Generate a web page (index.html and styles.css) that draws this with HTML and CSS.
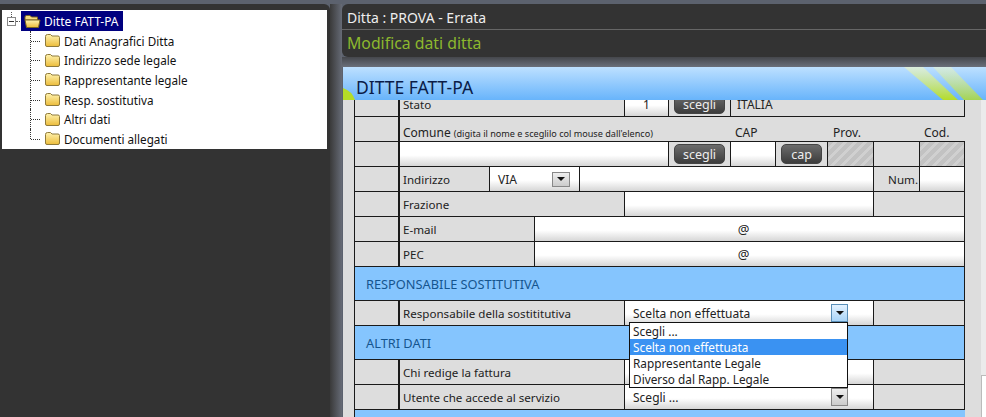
FILE: index.html
```html
<!DOCTYPE html>
<html lang="it">
<head>
    <meta charset="UTF-8">
    <title>Ditte FATT-PA</title>
    <link rel="stylesheet" href="styles.css">
</head>
<body>
    <svg class="defs" width="0" height="0">
        <defs>
            <linearGradient id="fold" x1="0" y1="0" x2="0" y2="1">
                <stop offset="0" stop-color="#fff3b0"/>
                <stop offset="1" stop-color="#ecbc3a"/>
            </linearGradient>
            <symbol id="folder" viewBox="0 0 17 15">
                <path d="M1.5 3.5 Q1.5 1.5 3.5 1.5 H6.5 L8 3 H14 Q15.5 3 15.5 4.5 V12 Q15.5 13.5 14 13.5 H3 Q1.5 13.5 1.5 12 Z" fill="url(#fold)" stroke="#8f7a3a"/>
            </symbol>
            <symbol id="folder-open" viewBox="0 0 17 15">
                <path d="M1 3 Q1 1.5 2.5 1.5 H6 L7.5 3 H13.5 V6 H1 Z" fill="#f5dc80" stroke="#7a6420"/>
                <path d="M1 6 H16 L14.5 13.5 H2.5 Z" fill="url(#fold)" stroke="#7a6420"/>
            </symbol>
        </defs>
    </svg>

    <aside class="side">
        <div class="tree">
            <div class="tree-root">
                <span class="expander"></span>
                <span class="root-sel">
                    <svg class="ico" width="17" height="15"><use href="#folder-open"/></svg>
                    Ditte FATT-PA
                </span>
            </div>
            <ul class="tree-list">
                <li><span class="conn"></span><svg class="ico" width="17" height="15"><use href="#folder"/></svg>Dati Anagrafici Ditta</li>
                <li><span class="conn"></span><svg class="ico" width="17" height="15"><use href="#folder"/></svg>Indirizzo sede legale</li>
                <li><span class="conn"></span><svg class="ico" width="17" height="15"><use href="#folder"/></svg>Rappresentante legale</li>
                <li><span class="conn"></span><svg class="ico" width="17" height="15"><use href="#folder"/></svg>Resp. sostitutiva</li>
                <li><span class="conn"></span><svg class="ico" width="17" height="15"><use href="#folder"/></svg>Altri dati</li>
                <li><span class="conn last"></span><svg class="ico" width="17" height="15"><use href="#folder"/></svg>Documenti allegati</li>
            </ul>
        </div>
    </aside>
    <div class="gutter"></div>

    <main class="main">
        <div class="top">
            <div class="top-name">Ditta : PROVA - Errata</div>
            <div class="top-title">Modifica dati ditta</div>
        </div>
        <div class="top-fade"></div>

        <section class="card">
            <header class="card-head">
                <svg class="corner" width="12" height="12"><path d="M0 0 Q9 3 12 12 H0 Z" fill="#b4dc28"/></svg>
                <svg class="stripes" width="90" height="33">
                    <defs>
                        <linearGradient id="lime" x1="0" y1="0" x2="0" y2="1">
                            <stop offset="0" stop-color="#eef6c8" stop-opacity="0.6"/>
                            <stop offset="1" stop-color="#b4dc28"/>
                        </linearGradient>
                    </defs>
                    <polygon points="5,0 24,0 59,33 44,33" fill="url(#lime)"/>
                    <polygon points="34,0 52,0 84,33 65,33" fill="url(#lime)" opacity="0.8"/>
                </svg>
                <h1>DITTE FATT-PA</h1>
            </header>

            <div class="card-body">
                <div class="scroller">
                    <table class="form">
                        <colgroup>
                            <col class="c45"><col class="c90"><col class="c45"><col class="c45"><col class="c45"><col class="c44">
                            <col class="c62"><col class="c45"><col class="c52"><col class="c46"><col class="c46"><col class="c45">
                        </colgroup>
                        <tr>
                            <td class="first"></td>
                            <td colspan="4">Stato</td>
                            <td class="inp center">1</td>
                            <td class="btn-cell"><button class="btn">scegli</button></td>
                            <td colspan="5" class="stato-name">ITALIA</td>
                        </tr>
                        <tr>
                            <td class="first"></td>
                            <td colspan="6" class="bare comune">Comune <small>(digita il nome e sceglilo col mouse dall'elenco)</small></td>
                            <td colspan="2" class="bare">CAP</td>
                            <td colspan="2" class="bare prov">Prov.</td>
                            <td class="bare">Cod.</td>
                        </tr>
                        <tr>
                            <td class="first"></td>
                            <td colspan="5" class="inp"></td>
                            <td class="btn-cell"><button class="btn">scegli</button></td>
                            <td class="inp"></td>
                            <td class="btn-cell"><button class="btn btn-cap">cap</button></td>
                            <td class="hatch"></td>
                            <td></td>
                            <td class="hatch"></td>
                        </tr>
                        <tr>
                            <td class="first"></td>
                            <td>Indirizzo</td>
                            <td colspan="2" class="inp sel-cell">
                                <div class="sel sel-via">VIA <span class="arrow"></span></div>
                            </td>
                            <td colspan="6" class="inp"></td>
                            <td class="right">Num.</td>
                            <td class="inp"></td>
                        </tr>
                        <tr>
                            <td class="first"></td>
                            <td colspan="4">Frazione</td>
                            <td colspan="5" class="inp"></td>
                            <td colspan="2"></td>
                        </tr>
                        <tr>
                            <td class="first"></td>
                            <td colspan="2">E-mail</td>
                            <td colspan="9" class="inp at">@</td>
                        </tr>
                        <tr>
                            <td class="first"></td>
                            <td colspan="2">PEC</td>
                            <td colspan="9" class="inp at">@</td>
                        </tr>
                        <tr class="sec">
                            <td colspan="12">RESPONSABILE SOSTITUTIVA</td>
                        </tr>
                        <tr>
                            <td class="first"></td>
                            <td colspan="4">Responsabile della sostititutiva</td>
                            <td colspan="5" class="inp sel-cell drop-host">
                                <div class="sel">Scelta non effettuata <span class="arrow hover"></span></div>
                                <ul class="drop">
                                    <li>Scegli ...</li>
                                    <li class="on">Scelta non effettuata</li>
                                    <li>Rappresentante Legale</li>
                                    <li>Diverso dal Rapp. Legale</li>
                                </ul>
                            </td>
                            <td colspan="2"></td>
                        </tr>
                        <tr class="sec">
                            <td colspan="12">ALTRI DATI</td>
                        </tr>
                        <tr>
                            <td class="first"></td>
                            <td colspan="4">Chi redige la fattura</td>
                            <td colspan="5" class="inp"></td>
                            <td colspan="2"></td>
                        </tr>
                        <tr>
                            <td class="first"></td>
                            <td colspan="4">Utente che accede al servizio</td>
                            <td colspan="5" class="inp sel-cell">
                                <div class="sel">Scegli ... <span class="arrow"></span></div>
                            </td>
                            <td colspan="2"></td>
                        </tr>
                        <tr class="sec">
                            <td colspan="12"></td>
                        </tr>
                    </table>
                </div>
                <div class="edge"><div class="edge-box"></div></div>
            </div>
        </section>
    </main>
</body>
</html>
```

FILE: styles.css
```css
html, body { margin: 0; height: 417px; overflow: hidden; }
body { display: flex; background: #5c626e; font-family: "Noto Sans", sans-serif; font-size: 12px; color: #222; }
.defs { position: absolute; }

/* left tree */
.side { width: 330px; height: 413px; margin-top: 4px; flex: none; background: #333; border-radius: 0 6px 0 0; box-sizing: border-box; padding: 6px 3px 0 2px; }
.gutter { width: 12px; margin-top: 4px; flex: none; background: linear-gradient(to right, #3a3a3a, #666b76); }
.tree { background: #fff; height: 139px; color: #111; box-sizing: border-box; padding-top: 1px; font-size: 11.7px; }
.tree-root { display: flex; align-items: center; height: 20px; padding-left: 5px; }
.expander { position: relative; width: 7px; height: 7px; border: 1px solid #888; background: linear-gradient(to right, #333, #333) center / 5px 1px no-repeat #fff; margin-right: 5px; }
.expander::before { content: ""; position: absolute; left: 3px; top: -6px; height: 5px; border-left: 1px dotted #555; }
.expander::after { content: ""; position: absolute; left: 8px; top: 3px; width: 4px; border-top: 1px dotted #555; }
.root-sel { display: flex; align-items: center; height: 20px; width: 102px; background: #00007f; color: #fff; box-sizing: border-box; padding-left: 3px; font-size: 12px; }
.ico { flex: none; margin-right: 3px; }
.tree-list { list-style: none; margin: 0 0 0 28px; padding: 0; }
.tree-list li { display: flex; align-items: center; height: 19.6px; }
.conn { align-self: stretch; width: 13px; margin-right: 1px; border-left: 1px dotted #333; box-sizing: border-box; }
.conn::before { content: ""; display: block; height: 50%; width: 9px; border-bottom: 1px dotted #333; }
.conn.last { align-self: flex-start; height: 50%; }
.conn.last::before { height: 100%; }

/* right part */
.main { flex: 1; min-width: 0; margin-top: 4px; }
.top { height: 53px; background: #333; border-radius: 6px 0 0 6px; }
.top-name { height: 25px; line-height: 27px; padding-left: 5px; border-bottom: 1px solid #666; color: #eee; font-size: 14px; }
.top-title { line-height: 27px; padding-left: 5px; color: #8db82e; font-size: 15.8px; }
.top-fade { height: 10px; background: linear-gradient(#45474c, #6a6f7a); }

.card { margin-left: 1px; height: 350px; background: #ddd; }
.card-head { position: relative; height: 33px; background: linear-gradient(#bde0ff, #68b4fb); overflow: hidden; }
.card-head h1 { margin: 0; padding-left: 13px; line-height: 41px; font-size: 17.5px; font-weight: 400; color: #0a1c48; }
.corner { position: absolute; left: 0; bottom: 0; }
.stripes { position: absolute; right: -3px; top: 0; }

.card-body { display: flex; height: 317px; }
.scroller { margin-left: 11px; width: 611px; height: 317px; overflow: hidden; }
.edge { margin-left: auto; width: 5px; background: #ebebeb; }
.edge-box { margin-top: 275px; height: 42px; background: #fff; border-top: 1px solid #bbb; border-left: 1px solid #bbb; }

.form { table-layout: fixed; width: 611px; margin-top: -8px; border-collapse: separate; border-spacing: 0; border-left: 1px solid #1a1a1a; font-size: 11.6px; }
.c45 { width: 45px; }
.c90 { width: 90px; }
.c44 { width: 44px; }
.c62 { width: 62px; }
.c52 { width: 52px; }
.c46 { width: 46px; }
.form td { height: 24px; padding: 0 0 0 3px; border-right: 1px solid #1a1a1a; border-bottom: 1px solid #1a1a1a; white-space: nowrap; overflow: hidden; }
.form td.first { border-right-width: 2px; padding: 0; }
.form td.bare { border-right: 0; padding: 6px 0 0 4px; height: 18px; font-size: 12px; }
.form td.comune { padding-left: 3px; }
.form td.prov { padding-left: 5px; }
.form td.stato-name { padding-left: 6px; font-size: 12px; }
.comune small { font-size: 9.1px; }
.form .inp { background: linear-gradient(#fff 55%, #d6d6d6); }
.form .center { text-align: center; padding: 0; font-size: 12px; }
.form .right { text-align: right; padding: 0 1px 0 0; }
.form .at { text-align: center; padding: 0 12px 0 0; font-size: 13px; }
.form .hatch { background: repeating-linear-gradient(135deg, #c2c2c2 0 4px, #d0d0d0 4px 7px); }
.form .btn-cell { padding: 0; text-align: center; }
.btn { display: block; width: 51px; height: 20px; margin: 0 auto; padding: 0; border: 1px solid #444; border-radius: 5px; background: linear-gradient(#6c6c6c, #3c3c3c); color: #eee; font: 12.5px "Noto Sans", sans-serif; }
.btn-cap { width: 41px; }
.form .sec td { height: 33px; padding-left: 11px; background: #85c5fe; color: #15558f; font-size: 12.8px; }
.form .sec:last-child td { border: 0; }

.form .sel-cell { padding-left: 8px; font-size: 12px; }
.form .drop-host { position: relative; overflow: visible; }
.sel { display: flex; align-items: center; justify-content: space-between; padding-right: 25px; }
.sel-via { padding-right: 9px; }
.arrow { width: 15px; height: 16px; border: 1px solid #888; background: linear-gradient(#eee, #ccc); display: flex; align-items: center; justify-content: center; }
.sel-via .arrow { width: 16px; height: 13px; }
.arrow::before { content: ""; border: 4px solid transparent; border-top-color: #111; border-bottom-width: 0; }
.arrow.hover { background: linear-gradient(#e4f2ff, #a8d4f8); border-color: #5a8fb8; }
.drop { position: absolute; left: 4px; top: 21px; z-index: 2; width: 219px; box-sizing: border-box; margin: 0; padding: 0; list-style: none; background: #fff; border: 1px solid #111; font-size: 11.8px; }
.drop li { height: 16px; line-height: 16px; padding-left: 3px; }
.drop .on { background: #3a92f2; color: #fff; }
```
